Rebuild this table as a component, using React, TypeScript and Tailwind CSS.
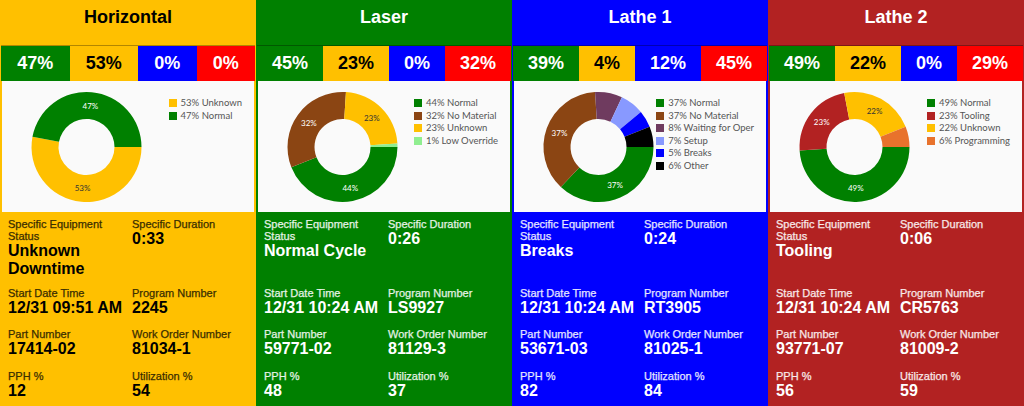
type Slice = { v: number; label: string; color: string }

type Machine = {
  name: string
  theme: 'yellow' | 'green' | 'blue' | 'red'
  pcts: string[]
  slices: Slice[]
  status: string
  duration: string
  start: string
  program: string
  part: string
  workOrder: string
  pph: string
  util: string
}

const GREEN = '#008000'
const YELLOW = '#ffc000'
const BROWN = '#8b4513'

const machines: Machine[] = [
  {
    name: 'Horizontal',
    theme: 'yellow',
    pcts: ['47%', '53%', '0%', '0%'],
    slices: [
      { v: 53, label: 'Unknown', color: YELLOW },
      { v: 47, label: 'Normal', color: GREEN },
    ],
    status: 'Unknown Downtime',
    duration: '0:33',
    start: '12/31 09:51 AM',
    program: '2245',
    part: '17414-02',
    workOrder: '81034-1',
    pph: '12',
    util: '54',
  },
  {
    name: 'Laser',
    theme: 'green',
    pcts: ['45%', '23%', '0%', '32%'],
    slices: [
      { v: 44, label: 'Normal', color: GREEN },
      { v: 32, label: 'No Material', color: BROWN },
      { v: 23, label: 'Unknown', color: YELLOW },
      { v: 1, label: 'Low Override', color: '#90ee90' },
    ],
    status: 'Normal Cycle',
    duration: '0:26',
    start: '12/31 10:24 AM',
    program: 'LS9927',
    part: '59771-02',
    workOrder: '81129-3',
    pph: '48',
    util: '37',
  },
  {
    name: 'Lathe 1',
    theme: 'blue',
    pcts: ['39%', '4%', '12%', '45%'],
    slices: [
      { v: 37, label: 'Normal', color: GREEN },
      { v: 37, label: 'No Material', color: BROWN },
      { v: 8, label: 'Waiting for Oper', color: '#6f3b5f' },
      { v: 7, label: 'Setup', color: '#8899ff' },
      { v: 5, label: 'Breaks', color: '#0000ff' },
      { v: 6, label: 'Other', color: '#000000' },
    ],
    status: 'Breaks',
    duration: '0:24',
    start: '12/31 10:24 AM',
    program: 'RT3905',
    part: '53671-03',
    workOrder: '81025-1',
    pph: '82',
    util: '84',
  },
  {
    name: 'Lathe 2',
    theme: 'red',
    pcts: ['49%', '22%', '0%', '29%'],
    slices: [
      { v: 49, label: 'Normal', color: GREEN },
      { v: 23, label: 'Tooling', color: '#b22222' },
      { v: 22, label: 'Unknown', color: YELLOW },
      { v: 6, label: 'Programming', color: '#e8722c' },
    ],
    status: 'Tooling',
    duration: '0:06',
    start: '12/31 10:24 AM',
    program: 'CR5763',
    part: '93771-07',
    workOrder: '81009-2',
    pph: '56',
    util: '59',
  },
]

// full class strings per card colour
const themes = {
  yellow: { bg: 'bg-[#ffc000]', text: 'text-black', label: 'text-[#3a2e00]' },
  green: { bg: 'bg-[#008000]', text: 'text-white', label: 'text-white/85' },
  blue: { bg: 'bg-[#0000ff]', text: 'text-white', label: 'text-white/85' },
  red: { bg: 'bg-[#b22222]', text: 'text-white', label: 'text-white/85' },
}

const pctCells = [
  'bg-[#008000] text-white',
  'bg-[#ffc000] text-black',
  'bg-[#0000ff] text-white',
  'bg-[#ff0000] text-white',
]

const CX = 84.5
const CY = 66
const R = 55
const RI = 28

function pt(r: number, deg: number) {
  const a = (deg * Math.PI) / 180
  return [CX + r * Math.cos(a), CY + r * Math.sin(a)]
}

function arc(start: number, end: number) {
  const large = end - start > 180 ? 1 : 0
  const [x1, y1] = pt(R, start)
  const [x2, y2] = pt(R, end)
  const [x3, y3] = pt(RI, end)
  const [x4, y4] = pt(RI, start)
  return `M${x1} ${y1} A${R} ${R} 0 ${large} 1 ${x2} ${y2} L${x3} ${y3} A${RI} ${RI} 0 ${large} 0 ${x4} ${y4} Z`
}

function Donut({ slices }: { slices: Slice[] }) {
  let acc = 0
  const parts = slices.map((s) => {
    const start = (acc / 100) * 360
    acc += s.v
    const end = (acc / 100) * 360
    return { ...s, start, end }
  })
  return (
    <svg width="142" height="131" viewBox="0 0 142 131" className="shrink-0">
      {parts.map((p, i) => (
        <path key={i} d={arc(p.start, p.end)} fill={p.color} />
      ))}
      {parts
        .filter((p) => p.v >= 10)
        .map((p, i) => {
          const [x, y] = pt((R + RI) / 2, (p.start + p.end) / 2)
          return (
            <text
              key={i}
              x={x}
              y={y}
              textAnchor="middle"
              dominantBaseline="central"
              fontSize="8"
              fontFamily="Lato, sans-serif"
              fill={p.color === YELLOW ? '#333' : '#fff'}
            >
              {p.v}%
            </text>
          )
        })}
    </svg>
  )
}

function Field({ label, value, labelCls }: { label: string; value: string; labelCls: string }) {
  return (
    <div>
      <div className={`text-[11px] leading-[12px] [-webkit-text-stroke:0.25px_currentColor] ${labelCls}`}>
        {label}
      </div>
      <div className="text-[16px] font-bold leading-[18px]">{value}</div>
    </div>
  )
}

function Card({ m }: { m: Machine }) {
  const t = themes[m.theme]
  return (
    <div className={`flex h-[406px] w-[256px] flex-col px-[1px] ${t.bg} ${t.text}`}>
      <div className="h-[46px] border-b border-black/30 pt-[6px] text-center text-[18px] font-bold leading-[22px]">
        {m.name}
      </div>
      <div className="flex h-[35px]">
        {m.pcts.map((p, i) => (
          <div
            key={i}
            className={`flex flex-auto items-center justify-center text-[18px] font-bold ${pctCells[i]}`}
          >
            {p}
          </div>
        ))}
      </div>
      <div className="mx-[1px] flex h-[131px] bg-[#fafafa]">
        <Donut slices={m.slices} />
        <div className="ml-auto pr-[12px] pt-[16px] font-['Lato',sans-serif] text-[9.5px] text-[#555]">
          {m.slices.map((s) => (
            <div key={s.label} className="flex h-[12.5px] items-center gap-[4px] whitespace-nowrap">
              <span className="h-[8px] w-[8px]" style={{ backgroundColor: s.color }} />
              <span>
                {s.v}% {s.label}
              </span>
            </div>
          ))}
        </div>
      </div>
      <div className="grid flex-1 grid-cols-[124px_1fr] grid-rows-[69px_41px_42px_1fr] pl-[7px] pt-[6px]">
        <Field label="Specific Equipment Status" value={m.status} labelCls={t.label} />
        <Field label="Specific Duration" value={m.duration} labelCls={t.label} />
        <Field label="Start Date Time" value={m.start} labelCls={t.label} />
        <Field label="Program Number" value={m.program} labelCls={t.label} />
        <Field label="Part Number" value={m.part} labelCls={t.label} />
        <Field label="Work Order Number" value={m.workOrder} labelCls={t.label} />
        <Field label="PPH %" value={m.pph} labelCls={t.label} />
        <Field label="Utilization %" value={m.util} labelCls={t.label} />
      </div>
    </div>
  )
}

export default function App() {
  return (
    <div className="flex h-[406px] w-[1024px] overflow-hidden font-['Liberation_Sans',Arial,sans-serif]">
      {machines.map((m) => (
        <Card key={m.name} m={m} />
      ))}
    </div>
  )
}
